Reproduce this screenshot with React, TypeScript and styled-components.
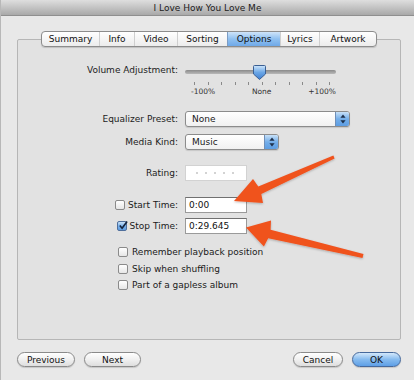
import React from "react";
import { styled, createGlobalStyle } from "styled-components";

const GlobalStyle = createGlobalStyle`
  html, body {
    margin: 0;
    padding: 0;
    background: #e8e8e8;
  }
  * {
    box-sizing: border-box;
  }
`;

const tabs = [
  { name: "Summary", w: 57 },
  { name: "Info", w: 35 },
  { name: "Video", w: 43 },
  { name: "Sorting", w: 50 },
  { name: "Options", w: 53 },
  { name: "Lyrics", w: 39 },
  { name: "Artwork", w: 57 },
];

function Stepper() {
  return (
    <StepperBox>
      <svg width="6" height="10" viewBox="0 0 6 10">
        <path d="M3 0.5 L5.6 3.8 L0.4 3.8 Z" fill="#1d2f4a" />
        <path d="M3 9.5 L5.6 6.2 L0.4 6.2 Z" fill="#1d2f4a" />
      </svg>
    </StepperBox>
  );
}

function Check({ checked }: { checked?: boolean }) {
  return (
    <CheckBox $checked={checked}>
      {checked && (
        <svg width="11" height="11" viewBox="0 0 11 11">
          <path
            d="M2 5.5 L4.5 8.5 L10 1"
            stroke="#13233d"
            strokeWidth="1.8"
            fill="none"
          />
        </svg>
      )}
    </CheckBox>
  );
}

function App() {
  return (
    <Window>
      <GlobalStyle />
      <TitleBar>I Love How You Love Me</TitleBar>
      <Body>
        <Panel>
          <TabBar>
            {tabs.map((t) => (
              <Tab key={t.name} $w={t.w} $active={t.name === "Options"}>
                {t.name}
              </Tab>
            ))}
          </TabBar>

          <SliderRow>
            <Label>Volume Adjustment:</Label>
            <Slider>
              <Track>
                <Knob>
                  <svg width="13" height="15" viewBox="0 0 13 15">
                    <defs>
                      <linearGradient id="kg" x1="0" y1="0" x2="0" y2="1">
                        <stop offset="0" stopColor="#cfe6fb" />
                        <stop offset="0.5" stopColor="#6aa6e6" />
                        <stop offset="1" stopColor="#3f7fd0" />
                      </linearGradient>
                    </defs>
                    <path
                      d="M1.5 0.5 H11.5 Q12.5 0.5 12.5 1.5 V9 L6.5 14.5 L0.5 9 V1.5 Q0.5 0.5 1.5 0.5 Z"
                      fill="url(#kg)"
                      stroke="#3b5f92"
                      strokeWidth="1"
                    />
                  </svg>
                </Knob>
              </Track>
              <Ticks>
                {new Array(11).fill(0).map((_, i) => (
                  <Tick key={i} />
                ))}
              </Ticks>
              <TickLabels>
                <span>-100%</span>
                <span>None</span>
                <span>+100%</span>
              </TickLabels>
            </Slider>
          </SliderRow>

          <Row $top={14}>
            <Label>Equalizer Preset:</Label>
            <Select $w={165}>
              <span>None</span>
              <Stepper />
            </Select>
          </Row>

          <Row $top={7}>
            <Label>Media Kind:</Label>
            <Select $w={94}>
              <span>Music</span>
              <Stepper />
            </Select>
          </Row>

          <Row $top={15}>
            <Label>Rating:</Label>
            <RatingBox>
              {new Array(5).fill(0).map((_, i) => (
                <Dot key={i} />
              ))}
            </RatingBox>
          </Row>

          <Row $top={16}>
            <CheckLabel>
              <Check />
              <span>Start Time:</span>
            </CheckLabel>
            <TextField>0:00</TextField>
          </Row>

          <Row $top={5}>
            <CheckLabel>
              <Check checked />
              <span>Stop Time:</span>
            </CheckLabel>
            <TextField>0:29.645</TextField>
          </Row>

          <OptionRow $top={10}>
            <Check />
            <span>Remember playback position</span>
          </OptionRow>
          <OptionRow $top={1}>
            <Check />
            <span>Skip when shuffling</span>
          </OptionRow>
          <OptionRow $top={0}>
            <Check />
            <span>Part of a gapless album</span>
          </OptionRow>
        </Panel>

        <Footer>
          <ButtonGroup>
            <Button $w={58}>Previous</Button>
            <Button $w={57}>Next</Button>
          </ButtonGroup>
          <ButtonGroup>
            <Button $w={50}>Cancel</Button>
            <Button $w={49} $primary>
              OK
            </Button>
          </ButtonGroup>
        </Footer>
      </Body>

      <Arrows width="414" height="380" viewBox="0 0 414 380">
        <defs>
          <filter id="sh" x="-10%" y="-10%" width="120%" height="130%">
            <feDropShadow dx="0" dy="1" stdDeviation="1" floodColor="#000" floodOpacity="0.25" />
          </filter>
        </defs>
        <g fill="#f0521f" filter="url(#sh)">
          <polygon points="233,201 252,179 257.3,186.5 332.4,155.6 333.6,158.4 260.3,193.9 262,203" />
          <polygon points="245,227.5 270,220.5 269.6,229.7 362.5,254.1 361.5,257.9 267.2,238.3 262.9,246.5" />
        </g>
      </Arrows>
    </Window>
  );
}

const Window = styled.div`
  position: relative;
  width: 414px;
  height: 380px;
  display: flex;
  flex-direction: column;
  background: #e8e8e8;
  border-left: 1px solid #b8b8b8;
  font-family: "DejaVu Sans", "Liberation Sans", sans-serif;
  font-size: 9px;
  color: #1a1a1a;
  overflow: hidden;
`;

const TitleBar = styled.div`
  height: 16px;
  display: flex;
  align-items: center;
  justify-content: center;
  background: linear-gradient(#dedede, #a9a9a9);
  border-bottom: 1px solid #8f8f8f;
  font-size: 9px;
  color: #202020;
`;

const Body = styled.div`
  flex: 1;
  display: flex;
  flex-direction: column;
  padding: 23px 13px 0 16px;
`;

const Panel = styled.div`
  height: 301px;
  display: flex;
  flex-direction: column;
  background: #e2e2e2;
  border: 1px solid #b6b6b6;
  border-radius: 2px;
`;

const TabBar = styled.div`
  align-self: center;
  margin-top: -9px;
  height: 16px;
  display: flex;
  background: linear-gradient(#ffffff, #ececec);
  border: 1px solid #8c8c8c;
  border-radius: 4px;
  box-shadow: 0 1px 1px rgba(0, 0, 0, 0.15);
  overflow: hidden;
`;

const Tab = styled.div<{ $w: number; $active?: boolean }>`
  width: ${(p) => p.$w}px;
  display: flex;
  align-items: center;
  justify-content: center;
  font-size: 9px;
  color: #111;
  border-left: 1px solid ${(p) => (p.$active ? "#7c9cc4" : "#cfcfcf")};
  background: ${(p) =>
    p.$active ? "linear-gradient(#cfe4f9, #8fc0f0 50%, #6fa9e8)" : "transparent"};

  &:first-child {
    border-left: none;
  }
`;

const Row = styled.div<{ $top: number }>`
  margin-top: ${(p) => p.$top}px;
  height: 16px;
  display: grid;
  grid-template-columns: 160px auto;
  column-gap: 7px;
  align-items: center;
`;

const SliderRow = styled.div`
  margin-top: 16px;
  display: grid;
  grid-template-columns: 160px auto;
  column-gap: 7px;
  align-items: start;
`;

const Label = styled.div`
  text-align: right;
  line-height: 12px;
  white-space: nowrap;
  color: #1c1c1c;

  ${SliderRow} & {
    margin-top: 1px;
  }
`;

const CheckLabel = styled.div`
  display: flex;
  justify-content: flex-end;
  align-items: center;
  gap: 3px;
  white-space: nowrap;
`;

const Slider = styled.div`
  width: 151px;
  display: flex;
  flex-direction: column;
`;

const Track = styled.div`
  position: relative;
  height: 18px;
  display: flex;
  align-items: center;

  &::before {
    content: "";
    flex: 1;
    height: 4px;
    border-radius: 2px;
    background: linear-gradient(#8a8a8a, #b9b9b9);
  }
`;

const Knob = styled.div`
  position: absolute;
  left: 68px;
  top: 2px;
  width: 13px;
  height: 15px;
  display: flex;
`;

const Ticks = styled.div`
  margin-top: 1px;
  height: 3px;
  display: flex;
  justify-content: space-between;
  padding: 0 6px 0 9px;
`;

const Tick = styled.div`
  width: 1px;
  height: 3px;
  background: #8a8a8a;
`;

const TickLabels = styled.div`
  margin-top: 2px;
  display: flex;
  justify-content: space-between;
  padding-left: 6px;
  font-size: 7.5px;
  line-height: 10px;
  color: #333;
`;

const Select = styled.div<{ $w: number }>`
  width: ${(p) => p.$w}px;
  height: 16px;
  display: flex;
  align-items: center;
  justify-content: space-between;
  padding-left: 6px;
  background: linear-gradient(#ffffff, #f1f1f1);
  border: 1px solid #8c8c8c;
  border-radius: 3px;
  box-shadow: 0 1px 1px rgba(0, 0, 0, 0.12);
  overflow: hidden;
`;

const StepperBox = styled.div`
  width: 14px;
  height: 100%;
  display: flex;
  align-items: center;
  justify-content: center;
  background: linear-gradient(#c8e1f8, #74aee9 50%, #5d9de2);
  border-left: 1px solid #6f8fb8;
`;

const RatingBox = styled.div`
  width: 62px;
  height: 16px;
  display: flex;
  align-items: center;
  gap: 7px;
  padding-left: 10px;
  background: #ffffff;
  border: 1px solid #d2d2d2;
`;

const Dot = styled.div`
  width: 2px;
  height: 2px;
  border-radius: 1px;
  background: #c4c4c4;
`;

const TextField = styled.div`
  width: 62px;
  height: 16px;
  display: flex;
  align-items: center;
  padding-left: 3px;
  background: #ffffff;
  border: 1px solid #9a9a9a;
  border-top-color: #707070;
  font-size: 9px;
  color: #111;
`;

const CheckBox = styled.div<{ $checked?: boolean }>`
  width: 10px;
  height: 10px;
  display: flex;
  align-items: center;
  justify-content: center;
  border: 1px solid ${(p) => (p.$checked ? "#4f6f9c" : "#8a8a8a")};
  border-radius: 2px;
  background: ${(p) =>
    p.$checked
      ? "linear-gradient(#c9e2f8, #78b0ea 50%, #5f9ee2)"
      : "linear-gradient(#ffffff, #e6e6e6)"};
  overflow: visible;

  & > svg {
    margin-top: -2px;
    margin-right: -2px;
  }
`;

const OptionRow = styled.div<{ $top: number }>`
  margin-top: ${(p) => p.$top}px;
  height: 16px;
  display: flex;
  align-items: center;
  gap: 4px;
  padding-left: 100px;
  white-space: nowrap;
`;

const Footer = styled.div`
  margin-top: 12px;
  display: flex;
  justify-content: space-between;
  padding-left: 0;
`;

const ButtonGroup = styled.div`
  display: flex;
  gap: 9px;
`;

const Button = styled.div<{ $w: number; $primary?: boolean }>`
  width: ${(p) => p.$w}px;
  height: 15px;
  display: flex;
  align-items: center;
  justify-content: center;
  border-radius: 8px;
  border: 1px solid ${(p) => (p.$primary ? "#46699c" : "#8a8a8a")};
  background: ${(p) =>
    p.$primary
      ? "linear-gradient(#d3e8fb, #86bbef 50%, #5e9fe6)"
      : "linear-gradient(#ffffff, #f0f0f0 50%, #dedede)"};
  box-shadow: 0 1px 1px rgba(0, 0, 0, 0.15);
  font-size: 9px;
  color: #111;
`;

const Arrows = styled.svg`
  position: absolute;
  left: 0;
  top: 0;
  pointer-events: none;
`;

export default App;
